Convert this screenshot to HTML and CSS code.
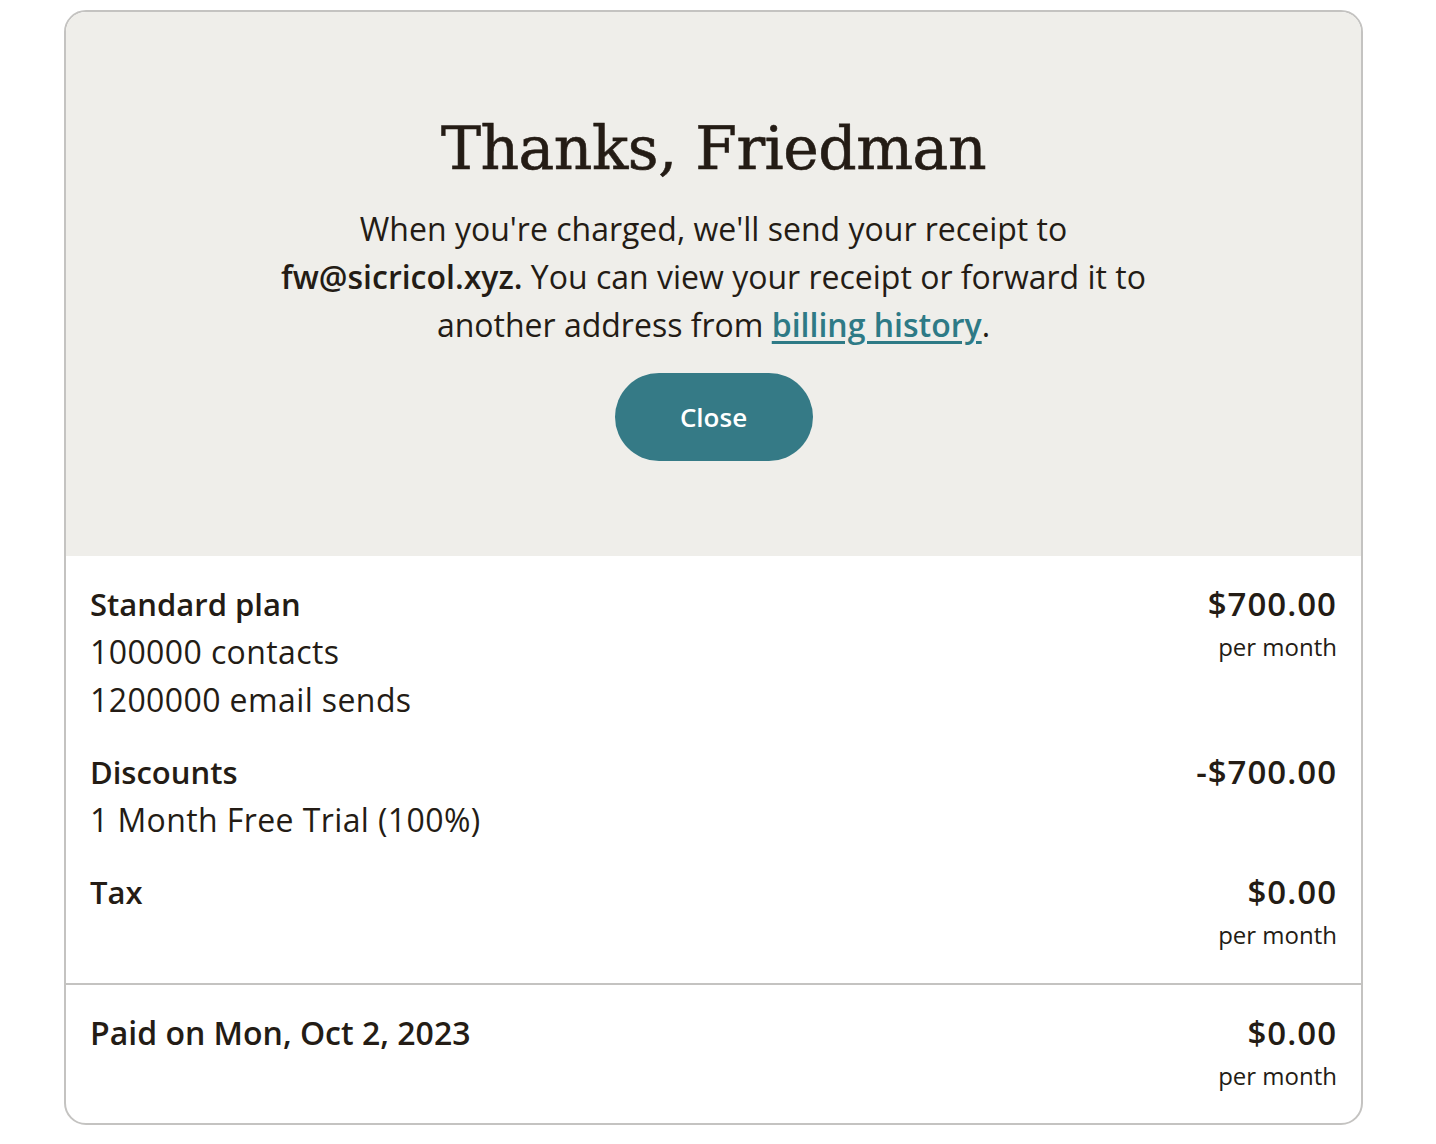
FILE: index.html
```html
<!DOCTYPE html>
<html>
<head>
<meta charset="utf-8">
<link rel="stylesheet" href="styles.css">
</head>
<body>
<div class="card">
  <div class="hero">
    <h1 class="title">Thanks, Friedman</h1>
    <p class="msg">When you're charged, we'll send your receipt to<br><strong>fw@sicricol.xyz.</strong> You can view your receipt or forward it to<br>another address from <a class="link" href="#">billing history</a>.</p>
    <button class="btn">Close</button>
  </div>
  <div class="items">
    <div class="row">
      <div class="left">
        <div class="label">Standard plan</div>
        <div class="sub">100000 contacts</div>
        <div class="sub">1200000 email sends</div>
      </div>
      <div class="right">
        <div class="amount">$700.00</div>
        <div class="period">per month</div>
      </div>
    </div>
    <div class="row">
      <div class="left">
        <div class="label">Discounts</div>
        <div class="sub">1 Month Free Trial (100%)</div>
      </div>
      <div class="right">
        <div class="amount">-$700.00</div>
      </div>
    </div>
    <div class="row">
      <div class="left">
        <div class="label">Tax</div>
      </div>
      <div class="right">
        <div class="amount">$0.00</div>
        <div class="period">per month</div>
      </div>
    </div>
  </div>
  <div class="total">
    <div class="row">
      <div class="left">
        <div class="label label-wide">Paid on Mon, Oct 2, 2023</div>
      </div>
      <div class="right">
        <div class="amount">$0.00</div>
        <div class="period">per month</div>
      </div>
    </div>
  </div>
</div>
</body>
</html>
```
FILE: styles.css
```css
html, body { margin: 0; padding: 0; background: #ffffff; }
body {
  font-family: "Open Sans", "Liberation Sans", sans-serif;
  color: #241c15;
}
.card {
  box-sizing: border-box;
  width: 1299px;
  margin: 10px 0 0 64px;
  border: 2px solid #c4c3c1;
  border-radius: 22px;
  overflow: hidden;
  background: #fff;
}
.hero {
  background: #efeeea;
  text-align: center;
  padding: 100px 24px 95px;
  display: flex;
  flex-direction: column;
  align-items: center;
}
.title {
  font-family: "DejaVu Serif", serif;
  font-weight: normal;
  font-size: 60px;
  line-height: 72px;
  margin: 0 0 21px;
  letter-spacing: -0.5px;
  -webkit-text-stroke: 0.6px #241c15;
}
.msg {
  margin: 0 0 24px;
  font-size: 32px;
  line-height: 48px;
}
.msg strong { font-weight: 600; }
.link {
  color: #2e7a86;
  font-weight: 600;
  text-decoration: underline;
  text-decoration-thickness: 3px;
  text-underline-offset: 4px;
}
.btn {
  width: 198px;
  height: 88px;
  border: none;
  border-radius: 44px;
  background: #357a86;
  color: #fff;
  font-family: "Open Sans", "Liberation Sans", sans-serif;
  font-size: 26px;
  font-weight: 600;
}
.items {
  padding: 24px 24px 29px;
  display: flex;
  flex-direction: column;
  gap: 24px;
  border-bottom: 2px solid #c4c3c1;
}
.total {
  padding: 24px 24px 28px;
}
.row {
  display: flex;
  justify-content: space-between;
  align-items: flex-start;
}
.label, .amount {
  font-size: 31px;
  font-weight: 600;
  line-height: 48px;
}
.label-wide { font-size: 32px; }
.amount { font-size: 33px; letter-spacing: 1px; }
.sub {
  font-size: 32px;
  line-height: 48px;
  letter-spacing: 0.4px;
}
.right { text-align: right; }
.period {
  font-size: 24px;
  line-height: 38px;
}
```
